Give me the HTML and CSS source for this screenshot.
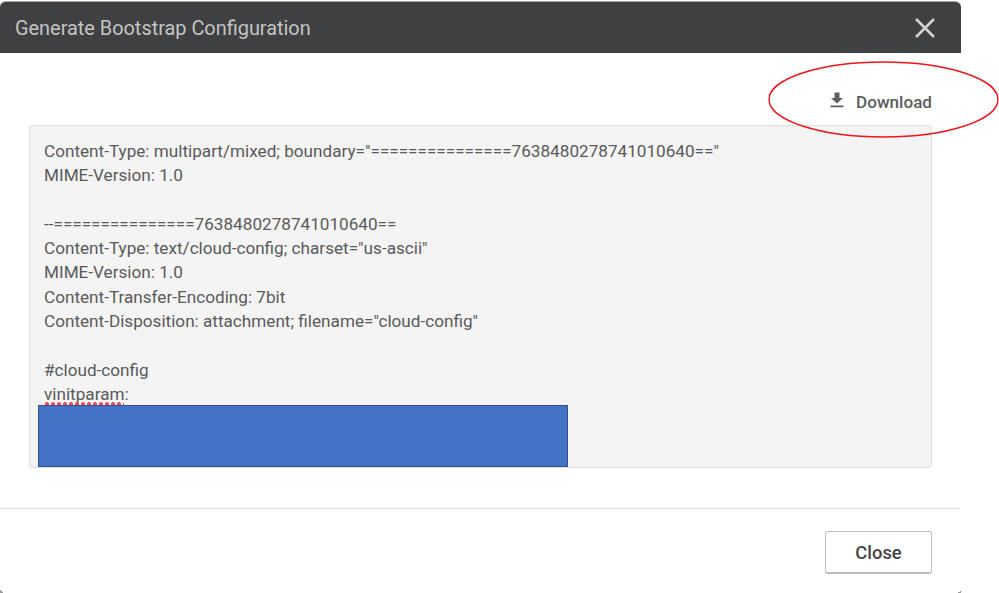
FILE: index.html
```html
<!DOCTYPE html>
<html lang="en">
<head>
<meta charset="utf-8">
<title>Generate Bootstrap Configuration</title>
<link rel="stylesheet" href="styles.css">
</head>
<body>
<div class="modal">
  <header class="modal-head">
    <h1 class="modal-title">Generate Bootstrap Configuration</h1>
    <button class="close-x" aria-label="Close">
      <svg width="22" height="22" viewBox="0 0 22 22"><path d="M2 2 20 20M20 2 2 20" fill="none" stroke="#d2d2d2" stroke-width="2.6"/></svg>
    </button>
  </header>
  <div class="modal-body">
    <div class="actions">
      <a class="download">
        <svg class="dl-icon" width="14" height="16" viewBox="0 0 14 16"><path d="M4.500 0.500h5v5.500h3.500L7 11.500 1 6h3.500z M0.500 13.500h13v1.800h-13z" fill="#5f5f5f"/></svg>
        <span>Download</span>
      </a>
    </div>
    <pre class="config">Content-Type: multipart/mixed; boundary="===============7638480278741010640=="
MIME-Version: 1.0

--===============7638480278741010640==
Content-Type: text/cloud-config; charset="us-ascii"
MIME-Version: 1.0
Content-Transfer-Encoding: 7bit
Content-Disposition: attachment; filename="cloud-config"

#cloud-config
<span class="misspelt">vinitparam</span>:</pre>
  </div>
  <footer class="modal-foot">
    <button class="close-btn">Close</button>
  </footer>
</div>
<div class="redaction"></div>
<svg class="callout" width="232" height="78" viewBox="0 0 232 78"><ellipse cx="115.500" cy="38.500" rx="114.500" ry="37.500" fill="none" stroke="#f2141a" stroke-width="1.400"/></svg>
</body>
</html>
```
FILE: styles.css
```css
* { box-sizing: border-box; }
html, body { margin: 0; height: 100%; }
body {
  position: relative;
  width: 999px;
  height: 593px;
  overflow: hidden;
  background: #fff;
  font-family: Roboto, "Liberation Sans", sans-serif;
}
.modal {
  position: relative;
  width: 961px;
  height: 593px;
  padding-top: 1px;
  display: flex;
  flex-direction: column;
  background: #fff;
}
.modal::before,
.modal::after {
  content: "";
  position: absolute;
  bottom: 0;
  width: 3px;
  height: 3px;
}
.modal::before {
  left: 0;
  background: linear-gradient(45deg, #9a9a9a 50%, transparent 50%);
}
.modal::after {
  left: 958px;
  background: linear-gradient(-45deg, #9a9a9a 50%, transparent 50%);
}
.modal-head {
  height: 52px;
  flex: none;
  display: flex;
  align-items: center;
  justify-content: space-between;
  padding: 1px 25px 0 15px;
  background: #3f4041;
  border-top: 1px solid #a9a9a9;
  border-radius: 6px 6px 0 0;
}
.modal-title {
  margin: 0;
  font-size: 19.900px;
  font-weight: 400;
  color: #c4c4c4;
}
.close-x {
  display: flex;
  margin-top: -1px;
  padding: 0;
  border: 0;
  background: none;
}
.modal-body {
  flex: none;
  width: 960px;
  height: 456px;
  padding: 0 28px 0 29px;
  border-bottom: 1px solid #dedede;
}
.actions {
  height: 72px;
  display: flex;
  justify-content: flex-end;
  align-items: flex-start;
  padding-top: 39px;
}
.download {
  display: flex;
  align-items: center;
  gap: 12px;
  font-size: 17.100px;
  font-weight: 500;
  color: #5c5c5c;
}
.dl-icon { margin-top: -4px; }
.config {
  margin: 0;
  width: 903px;
  height: 343px;
  padding: 13px 15px 0 14px;
  overflow: hidden;
  background: #f4f4f4;
  border: 1px solid #e0e0e0;
  border-radius: 3px;
  font-family: Roboto, "Liberation Sans", sans-serif;
  font-size: 17.150px;
  line-height: 24.300px;
  color: #5a5a5a;
}
.misspelt {
  position: relative;
}
.misspelt::after {
  content: "";
  position: absolute;
  left: 0;
  top: 18px;
  width: 80px;
  height: 4px;
  background: radial-gradient(circle at 50% 50%, #ef4a4f 1.700px, transparent 2.200px) 0 0 / 6px 4px repeat-x;
}
.modal-foot {
  flex: 1;
  display: flex;
  justify-content: flex-end;
  align-items: flex-start;
  padding: 22px 29px 0 0;
}
.close-btn {
  width: 107px;
  height: 43px;
  background: #fff;
  border: 1px solid #bdbdbd;
  border-bottom-width: 2px;
  border-radius: 3px;
  font-family: Roboto, "Liberation Sans", sans-serif;
  font-size: 18.400px;
  font-weight: 500;
  color: #444;
}
.redaction {
  position: absolute;
  left: 38px;
  top: 405px;
  width: 530px;
  height: 62px;
  background: #4472c4;
  border: 1px solid #2f528f;
}
.callout {
  position: absolute;
  left: 768px;
  top: 61px;
}
```
